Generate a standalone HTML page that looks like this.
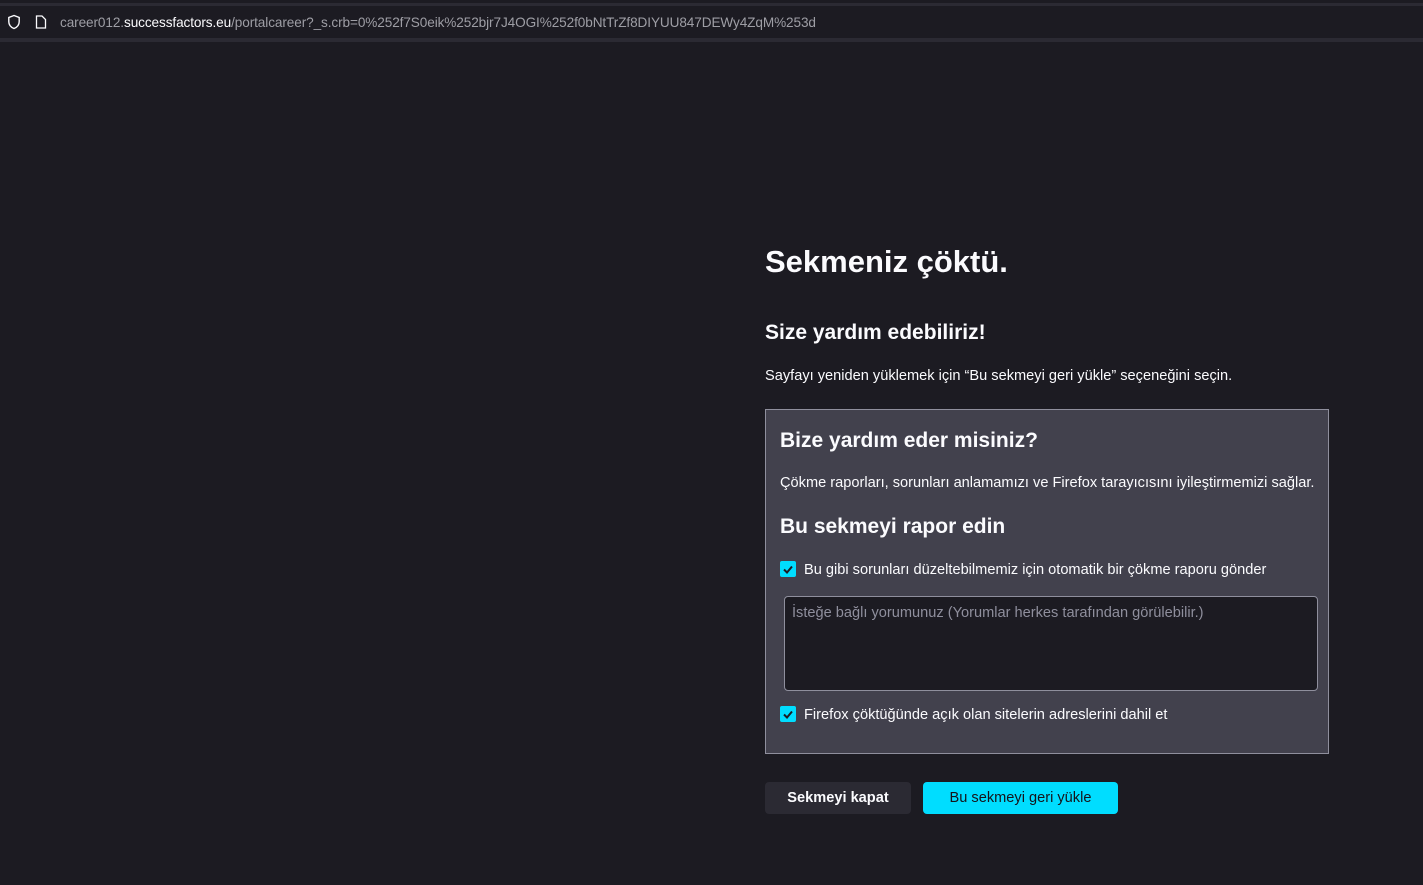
<!DOCTYPE html>
<html><head><meta charset="utf-8"><style>
*{margin:0;padding:0;box-sizing:border-box}
body{width:1423px;height:885px;background:#1c1b22;font-family:"Liberation Sans",sans-serif;color:#fbfbfe;position:relative;overflow:hidden}
.topline{position:absolute;left:0;top:0;width:1423px;height:6px;background:#1c1b22;border-bottom:3px solid #2b2a33}
.url{position:absolute;left:0;top:6px;width:1423px;height:32px;background:#1c1b22}
.bot{position:absolute;left:0;top:38px;width:1423px;height:4px;background:#2b2a33}
.urltext{position:absolute;left:60px;top:15px;font-size:13.6px;color:#9e9ea5;letter-spacing:-0.1px}
.urltext b{font-weight:normal;color:#fbfbfe}
.a{position:absolute;white-space:nowrap}
h1{font-size:31px;font-weight:bold;left:765px;top:244px}
.h2{font-size:21px;font-weight:bold}
.p{font-size:14.6px}
.panel{position:absolute;left:765px;top:409px;width:564px;height:345px;background:#42414d;border:1px solid #8f8f9d}
.cb{position:absolute;width:16px;height:16px;background:#00ddff;border-radius:2px}
.ta{position:absolute;left:784px;top:596px;width:534px;height:95px;background:#1c1b22;border:1px solid #8f8f9d;border-radius:4px}
.btn{position:absolute;top:782px;height:32px;border-radius:4px;font-size:14.6px;font-weight:bold;text-align:center;line-height:32px}
</style></head><body>
<div class="topline"></div><div class="url"></div><div class="bot"></div>
<svg class="a" style="left:7px;top:14px" width="14" height="16" viewBox="0 0 14 16"><path d="M7 1.5L1.8 3.5v4.2c0 3.3 2.3 5.6 5.2 6.8 2.9-1.2 5.2-3.5 5.2-6.8V3.5z" fill="none" stroke="#fbfbfe" stroke-width="1.4"/></svg>
<svg class="a" style="left:35px;top:15px" width="12" height="14" viewBox="0 0 12 14"><path d="M1.5 1h5.5l3.5 3.5V13h-9z" fill="none" stroke="#fbfbfe" stroke-width="1.3"/></svg>
<div class="a urltext">career012.<b>successfactors.eu</b>/portalcareer?_s.crb=0%252f7S0eik%252bjr7J4OGI%252f0bNtTrZf8DIYUU847DEWy4ZqM%253d</div>
<h1 class="a">Sekmeniz çöktü.</h1>
<div class="a h2" style="left:765px;top:321px">Size yardım edebiliriz!</div>
<div class="a p" style="left:765px;top:368px">Sayfayı yeniden yüklemek için “Bu sekmeyi geri yükle” seçeneğini seçin.</div>
<div class="panel"></div>
<div class="a h2" style="left:780px;top:429px">Bize yardım eder misiniz?</div>
<div class="a p" style="left:780px;top:475px">Çökme raporları, sorunları anlamamızı ve Firefox tarayıcısını iyileştirmemizi sağlar.</div>
<div class="a h2" style="left:780px;top:515px">Bu sekmeyi rapor edin</div>
<div class="cb" style="left:780px;top:561px"><svg width="16" height="16"><path d="M4 8.5l3 3 5-6" stroke="#1c1b22" stroke-width="2" fill="none"/></svg></div>
<div class="a p" style="left:804px;top:562px">Bu gibi sorunları düzeltebilmemiz için otomatik bir çökme raporu gönder</div>
<div class="ta"></div>
<div class="a p" style="left:792px;top:605px;color:#8f8f9d">İsteğe bağlı yorumunuz (Yorumlar herkes tarafından görülebilir.)</div>
<div class="cb" style="left:780px;top:706px"><svg width="16" height="16"><path d="M4 8.5l3 3 5-6" stroke="#1c1b22" stroke-width="2" fill="none"/></svg></div>
<div class="a p" style="left:804px;top:707px">Firefox çöktüğünde açık olan sitelerin adreslerini dahil et</div>
<div class="btn" style="left:765px;width:146px;background:#2b2a33;color:#fbfbfe">Sekmeyi kapat</div>
<div class="btn" style="left:923px;width:195px;background:#00ddff;color:#15141a;font-weight:normal">Bu sekmeyi geri yükle</div>
</body></html>
